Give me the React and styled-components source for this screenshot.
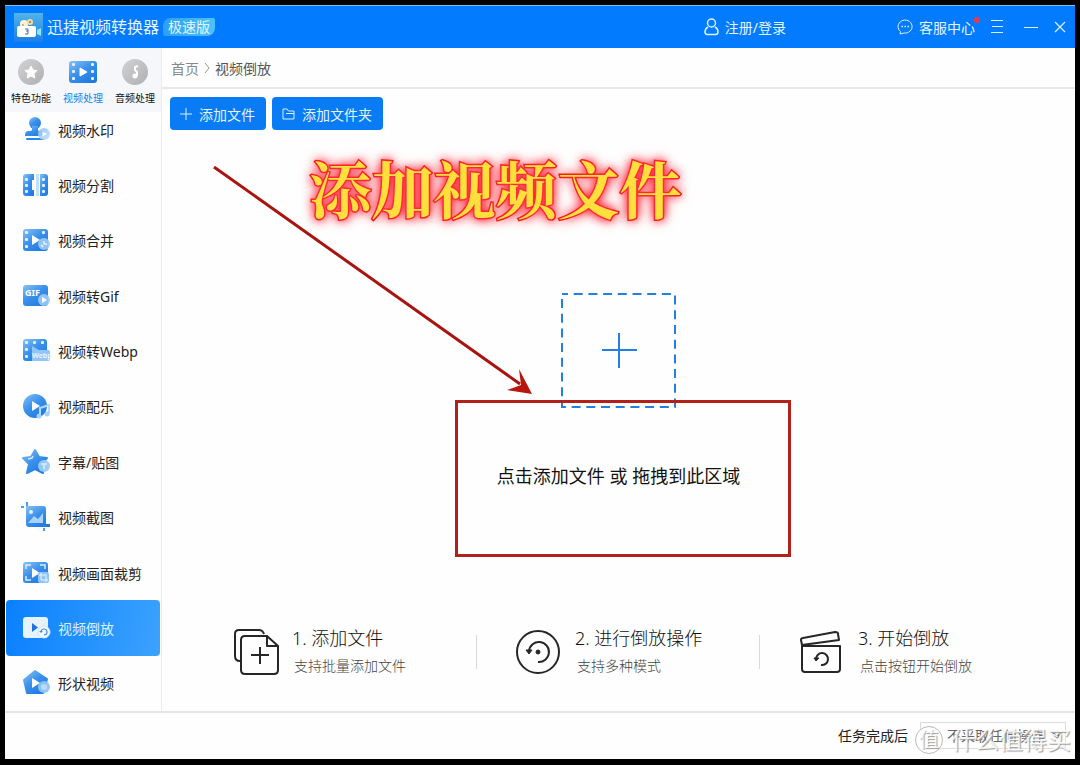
import React, { useState } from "react";
import styled, { createGlobalStyle } from "styled-components";

const menuItems = [
  { id: "watermark", label: "视频水印" },
  { id: "split", label: "视频分割" },
  { id: "merge", label: "视频合并" },
  { id: "gif", label: "视频转Gif" },
  { id: "webp", label: "视频转Webp" },
  { id: "music", label: "视频配乐" },
  { id: "sticker", label: "字幕/贴图" },
  { id: "capture", label: "视频截图" },
  { id: "crop", label: "视频画面裁剪" },
  { id: "reverse", label: "视频倒放" },
  { id: "shape", label: "形状视频" },
];

const tabs = [
  { id: "special", label: "特色功能" },
  { id: "video", label: "视频处理" },
  { id: "audio", label: "音频处理" },
];

const steps = [
  { id: "add", title: "1. 添加文件", text: "支持批量添加文件" },
  { id: "rewind", title: "2. 进行倒放操作", text: "支持多种模式" },
  { id: "start", title: "3. 开始倒放", text: "点击按钮开始倒放" },
];

const Gradients = () => (
  <HiddenSvg aria-hidden="true">
    <defs>
      <linearGradient id="blue" x1="0" y1="0" x2="0.8" y2="1">
        <stop offset="0" stopColor="#86c2f8" />
        <stop offset="0.5" stopColor="#3a90ea" />
        <stop offset="1" stopColor="#1f7ae0" />
      </linearGradient>
      <linearGradient id="pale" x1="0" y1="0" x2="1" y2="1">
        <stop offset="0" stopColor="#8cc1f6" />
        <stop offset="1" stopColor="#c4e0fb" />
      </linearGradient>
      <linearGradient id="grey" x1="0" y1="0" x2="1" y2="1">
        <stop offset="0" stopColor="#d2d2d4" />
        <stop offset="1" stopColor="#b0b0b3" />
      </linearGradient>
      <linearGradient id="sky" x1="0" y1="0" x2="0" y2="1">
        <stop offset="0" stopColor="#4fb5e8" />
        <stop offset="1" stopColor="#1b7fe6" />
      </linearGradient>
    </defs>
  </HiddenSvg>
);

const Holes = ({ x, ys = [6, 12, 18] }) =>
  ys.map((y) => (
    <rect key={y} x={x} y={y + 1} width="3" height="3" rx="1" fill="#e4f3ff" />
  ));

const menuShapes = {
  watermark: (
    <>
      <circle cx="13" cy="7" r="6" fill="url(#blue)" />
      <path d="M10 10h6v4c0 1 1 1 3 1 3 0 4 1 4 5H3c0-4 1-5 4-5 2 0 3 0 3-2z" fill="url(#blue)" />
      <rect x="4" y="22" width="18" height="2" rx="1" fill="#2a86e6" />
      <circle cx="22" cy="18" r="6" fill="url(#pale)" fillOpacity="0.9" />
      <path d="M20.500 15.500l4.500 2.500-4.500 2.500z" fill="#fff" />
    </>
  ),
  split: (
    <>
      <path d="M4 3h8v6h-2v10h2v6H4a3 3 0 0 1-3-3V6a3 3 0 0 1 3-3z" fill="url(#blue)" />
      <path d="M18 3h5a3 3 0 0 1 3 3v16a3 3 0 0 1-3 3h-5z" fill="url(#blue)" />
      <rect x="14" y="3" width="3" height="22" fill="#c4e0fb" />
      <Holes x={3} />
      <Holes x={20} />
    </>
  ),
  merge: (
    <>
      <rect x="1" y="3" width="25" height="22" rx="3" fill="url(#blue)" />
      <Holes x={3} ys={[4, 11, 18]} />
      <Holes x={20} ys={[4]} />
      <path d="M10 9l8 5-8 5z" fill="#fff" />
      <circle cx="22" cy="18" r="6" fill="#9bcaf7" fillOpacity="0.9" />
      <path d="M22 15v3h3M19 19l2 2" stroke="#e8f4ff" strokeWidth="1.500" fill="none" />
    </>
  ),
  gif: (
    <>
      <rect x="1" y="3" width="25" height="21" rx="3" fill="url(#blue)" />
      <text x="3" y="14" fontSize="9" fontWeight="700" fill="#fff">GIF</text>
      <circle cx="22" cy="18" r="6" fill="#9bcaf7" fillOpacity="0.9" />
      <path d="M20 15l5 3-5 3z" fill="#fff" />
    </>
  ),
  webp: (
    <>
      <rect x="1" y="2" width="24" height="22" rx="3" fill="url(#blue)" />
      <Holes x={3} ys={[3, 10, 17]} />
      <Holes x={11} ys={[3]} />
      <Holes x={19} ys={[3]} />
      <path d="M10 9l7 4h9a2 2 0 0 1 2 2v7a2 2 0 0 1-2 2H10z" fill="#8fc5f7" />
      <text x="10" y="21" fontSize="7" fontWeight="700" fill="#e4f3ff">Webp</text>
    </>
  ),
  music: (
    <>
      <circle cx="13" cy="14" r="12" fill="url(#blue)" />
      <path d="M10 9l8 5-8 5z" fill="#fff" />
      <path d="M18 24v-8l9-3v9" stroke="#b5d9fb" strokeWidth="2" fill="none" />
      <circle cx="17" cy="24" r="2.500" fill="#a5d0fa" />
      <circle cx="25" cy="22" r="2.500" fill="#a5d0fa" />
    </>
  ),
  sticker: (
    <>
      <path
        d="M13 2l4 7 8 1-6 6 2 9-8-4-8 4 2-9-6-6 8-1z"
        fill="url(#blue)"
        stroke="url(#blue)"
        strokeWidth="2"
        strokeLinejoin="round"
      />
      <path d="M6 11l4-1 1-2" stroke="#d4eaff" strokeWidth="1.500" fill="none" />
      <circle cx="22" cy="18" r="6" fill="#9bcaf7" fillOpacity="0.95" />
      <path d="M19 16h6M22 16v5" stroke="#d8ecff" strokeWidth="1.500" />
    </>
  ),
  capture: (
    <>
      <path d="M4 3h17a3 3 0 0 1 3 3v15h4v3H7a3 3 0 0 1-3-3z" fill="url(#blue)" />
      <path d="M5 -1v4M-1 4h3M22 25v3" stroke="#4d9bea" strokeWidth="2" />
      <circle cx="9" cy="9" r="2" fill="#e4f3ff" />
      <path d="M6 20l6-7 4 3 5-6v10z" fill="#a9d3fa" />
    </>
  ),
  crop: (
    <>
      <rect x="1" y="3" width="25" height="21" rx="3" fill="url(#blue)" />
      <path d="M4 10V6h5M18 6h5v4M4 17v4h5" stroke="#d8ecff" strokeWidth="1.500" fill="none" />
      <path d="M10 9l8 5-8 5z" fill="#fff" />
      <rect x="16" y="13" width="11" height="11" rx="2" fill="#8fc5f7" />
      <path d="M19 14v7h7M17 16h7v7" stroke="#e8f4ff" fill="none" />
    </>
  ),
  reverse: (
    <>
      <rect x="1" y="3" width="25" height="21" rx="3" fill="#e6f3ff" />
      <path d="M10 9l6 4.500-6 4.500z" fill="#1a74dc" />
      <circle cx="22" cy="18" r="6" fill="#f3f9ff" stroke="#cfe5fb" />
      <path d="M19 18a3 3 0 1 1 3 3" stroke="#4a8fd8" strokeWidth="1.200" fill="none" />
      <path d="M17 17h4l-2 2z" fill="#4a8fd8" />
    </>
  ),
  shape: (
    <>
      <path
        d="M13 2l12 8-4 14H5L2 11z"
        fill="url(#blue)"
        stroke="url(#blue)"
        strokeWidth="2"
        strokeLinejoin="round"
      />
      <path d="M10 9l8 5-8 5z" fill="#fff" />
      <circle cx="22" cy="18" r="6" fill="#8fc5f7" fillOpacity="0.95" />
      <circle cx="22" cy="18" r="3" fill="#b9dbfb" />
    </>
  ),
};

const tabShapes = {
  special: (
    <>
      <circle cx="14" cy="14" r="13" fill="url(#grey)" />
      <path
        d="M14 8l2 4 4 .5-3 3 .8 4.500-3.800-2-3.800 2 .8-4.500-3-3 4-.5z"
        fill="#fff"
        stroke="#fff"
        strokeLinejoin="round"
      />
    </>
  ),
  video: (
    <>
      <rect x="0" y="3" width="28" height="22" rx="3" fill="url(#blue)" />
      <Holes x={3} ys={[4, 11, 18]} />
      <Holes x={22} ys={[4, 11, 18]} />
      <path d="M11 10l7 4-7 4z" fill="#fff" stroke="#fff" strokeLinejoin="round" />
    </>
  ),
  audio: (
    <>
      <circle cx="14" cy="14" r="13" fill="url(#grey)" />
      <path d="M17 8l-3 1v3l2 2v4" stroke="#fff" strokeWidth="2" fill="none" />
      <circle cx="14" cy="18" r="2.500" fill="#fff" />
    </>
  ),
};

const stepShapes = {
  add: (
    <>
      <path d="M7 33C3 33 2 31 2 28V6c0-3 1-4 4-4h20c3 0 4 1 5 4" />
      <path d="M12 8h22l11 10v24c0 3-1 4-4 4H12c-3 0-4-1-4-4V12c0-3 1-4 4-4z" />
      <path d="M34 8v10h11M27 19v17M18 27h18" />
    </>
  ),
  rewind: (
    <>
      <circle cx="22" cy="24" r="21" />
      <path d="M13 23a10 10 0 1 1 9 11" />
      <path d="M10 22h6l-3 4z" fill="#262626" strokeWidth="1" />
      <circle cx="22" cy="24" r="2" fill="#262626" strokeWidth="1" />
    </>
  ),
  start: (
    <>
      <path d="M3 18h38v23c0 2-1 3-3 3H6c-2 0-3-1-3-3z" />
      <path d="M3 17L2 12c0-1 0-2 2-2l32-6c2 0 3 0 3 2l1 6z" />
      <path d="M17 31a6 6 0 1 1 5 6" />
      <path d="M15 30h5l-3 3z" fill="#262626" strokeWidth="1" />
    </>
  ),
};

const App = () => {
  const [active, setActive] = useState("reverse");
  const [tab, setTab] = useState("video");

  return (
    <Frame>
      <GlobalStyle />
      <Gradients />
      <TitleBar>
        <Brand>
          <svg width="29" height="29" viewBox="0 0 29 29">
            <rect width="29" height="29" fill="url(#sky)" />
            <circle cx="10" cy="11" r="4" fill="#fff3d8" />
            <circle cx="16" cy="9" r="3" fill="#f7d9a0" />
            <circle cx="16" cy="9" r="1" fill="#a8713a" />
            <circle cx="9" cy="12" r="1" fill="#e69a3c" />
            <rect x="3" y="13" width="19" height="11" rx="2" fill="#fff" />
            <path d="M23 17l4-2v8l-4-2z" fill="#8fe3f2" />
            <path d="M11 16h3v2h-2M14 18v3h-3" stroke="#4a6a8c" fill="none" />
          </svg>
          <AppName>迅捷视频转换器</AppName>
          <Edition>极速版</Edition>
        </Brand>
        <BarActions>
          <BarButton $space={111}>
            <svg width="15" height="18" viewBox="0 0 15 18" fill="none" stroke="#d9f1ff" strokeWidth="1.500">
              <circle cx="7.500" cy="5" r="4" />
              <path d="M4 9c-2 1-3 3-3 5 0 1.500 1 2.500 2.500 2.500h8c1.500 0 2.500-1 2.500-2.500 0-2-1-4-3-5" />
            </svg>
            注册/登录
          </BarButton>
          <BarButton $space={15}>
            <svg width="16" height="16" viewBox="0 0 16 16" fill="none" stroke="#d9f1ff">
              <path d="M3 15l.5-2.500A7 6.500 0 1 1 7 14z" strokeLinejoin="round" />
              <path d="M4.500 7.500h1.500M7.500 7.500H9M10.500 7.500H12" strokeWidth="1.500" />
            </svg>
            客服中心
            <Dot />
          </BarButton>
          <BarButton $space={20} aria-label="菜单">
            <svg width="14" height="14" viewBox="0 0 14 14" stroke="#d9f1ff">
              <path d="M1 0.500h12M2 6.500h11M1 12.500h12" />
            </svg>
          </BarButton>
          <BarButton $space={16} aria-label="最小化">
            <svg width="14" height="14" viewBox="0 0 14 14" stroke="#d9f1ff">
              <path d="M0 7.500h14" />
            </svg>
          </BarButton>
          <BarButton aria-label="关闭">
            <svg width="12" height="12" viewBox="0 0 12 12" stroke="#d9f1ff" strokeWidth="1.200">
              <path d="M1 1l10 10M11 1L1 11" />
            </svg>
          </BarButton>
        </BarActions>
      </TitleBar>

      <Body>
        <Sidebar>
          <Tabs>
            {tabs.map((t) => (
              <Tab key={t.id} $active={t.id === tab} onClick={() => setTab(t.id)}>
                <svg width="28" height="28" viewBox="0 0 28 28">{tabShapes[t.id]}</svg>
                {t.label}
              </Tab>
            ))}
          </Tabs>
          <Menu>
            {menuItems.map((item) => (
              <MenuItem
                key={item.id}
                $active={item.id === active}
                onClick={() => setActive(item.id)}
              >
                <MenuIcon viewBox="0 0 28 28">{menuShapes[item.id]}</MenuIcon>
                {item.label}
              </MenuItem>
            ))}
          </Menu>
        </Sidebar>

        <Main>
          <Breadcrumb>
            <CrumbLink href="#">首页</CrumbLink>
            <svg width="6" height="12" viewBox="0 0 6 12" fill="none" stroke="#9a9a9a">
              <path d="M1 1l4 5-4 5" />
            </svg>
            <span>视频倒放</span>
          </Breadcrumb>
          <Toolbar>
            <ToolButton>
              <svg width="12" height="12" viewBox="0 0 12 12" stroke="#d9f1ff">
                <path d="M6 0v12M0 6h12" />
              </svg>
              添加文件
            </ToolButton>
            <ToolButton>
              <svg width="13" height="12" viewBox="0 0 13 12" fill="none" stroke="#d9f1ff">
                <path d="M1 1h4l1.500 2H12v8H1zM4 5.500h8" />
              </svg>
              添加文件夹
            </ToolButton>
          </Toolbar>

          <DropArea>
            <DropButton>
              <svg width="115" height="115" viewBox="0 0 115 115" fill="none" stroke="#2380e0" strokeWidth="2">
                <rect x="1" y="1" width="113" height="113" strokeDasharray="9 5.700" strokeDashoffset="3" />
                <path d="M58 40v35M41 57h35" />
              </svg>
              <span>点击添加文件 或 拖拽到此区域</span>
            </DropButton>
            <Callout>添加视频文件</Callout>
            <Arrow viewBox="0 0 320 230">
              <path d="M1 1l306 217" stroke="#a81410" strokeWidth="3" />
              <path d="M319 228l-25-4 14-5-2-16z" fill="#b8160c" />
            </Arrow>
            <Highlight />
          </DropArea>

          <Steps>
            {steps.map((step) => (
              <Step key={step.id}>
                <StepIcon viewBox="0 0 48 48">{stepShapes[step.id]}</StepIcon>
                <div>
                  <StepTitle>{step.title}</StepTitle>
                  <StepText>{step.text}</StepText>
                </div>
              </Step>
            ))}
          </Steps>
        </Main>
      </Body>

      <Footer>
        <label htmlFor="after">任务完成后</label>
        <Select id="after" defaultValue="none">
          <option value="none">不采取任何操作</option>
        </Select>
        <Watermark>
          <WatermarkBadge>值</WatermarkBadge>
          什么值得买
        </Watermark>
      </Footer>
    </Frame>
  );
};

const GlobalStyle = createGlobalStyle`
  * {
    box-sizing: border-box;
  }

  body {
    margin: 0;
    background: #000;
    color: #222;
    font: 14px "Noto Sans", "Noto Sans CJK SC", sans-serif;
  }

  button, select {
    font: inherit;
    color: inherit;
    border: none;
    background: none;
    padding: 0;
    cursor: pointer;
  }
`;

const HiddenSvg = styled.svg`
  position: absolute;
  width: 0;
  height: 0;
`;

const Frame = styled.div`
  display: flex;
  flex-direction: column;
  min-height: 100vh;
  border: 5px solid #000;
  border-bottom-width: 6px;
  background: #fefefe;
`;

const TitleBar = styled.header`
  display: flex;
  align-items: center;
  justify-content: space-between;
  height: 43px;
  padding: 0 9px;
  color: #e3f4ff;
  background: #037bfe;
  border-top: 1px solid #7cc0fa;
`;

const Brand = styled.div`
  display: flex;
  align-items: center;
  gap: 4px;
`;

const AppName = styled.h1`
  margin: 0;
  font-size: 16px;
  font-weight: 400;
  line-height: 24px;
`;

const Edition = styled.span`
  padding: 0 5px;
  font-size: 14px;
  line-height: 18px;
  border-radius: 8px 2px 8px 2px;
  background: linear-gradient(90deg, #2ba0f5, #4cc3f7);
`;

const BarActions = styled.div`
  display: flex;
  align-items: center;
`;

const BarButton = styled.button`
  position: relative;
  display: flex;
  align-items: center;
  gap: 6px;
  margin-right: ${({ $space }) => ($space ? $space : 0)}px;
`;

const Dot = styled.i`
  position: absolute;
  top: 0;
  right: -5px;
  width: 6px;
  height: 6px;
  border-radius: 50%;
  background: #e8394a;
`;

const Body = styled.div`
  display: flex;
  flex: 1;
`;

const Sidebar = styled.aside`
  display: flex;
  flex-direction: column;
  width: 157px;
  flex-shrink: 0;
  border-right: 1px solid #ececee;
`;

const Tabs = styled.div`
  display: grid;
  grid-template-columns: repeat(3, 1fr);
  padding: 10px 0 6px;
  background: #f5f7fb;
`;

const Tab = styled.button`
  display: flex;
  flex-direction: column;
  align-items: center;
  gap: 4px;
  font-size: 10px;
  line-height: 16px;
  white-space: nowrap;
  color: ${({ $active }) => ($active ? "#1583ea" : "#111")};
`;

const Menu = styled.nav`
  display: flex;
  flex-direction: column;
  flex: 1;
  margin-top: -10px;
  padding: 0 1px;
`;

const MenuItem = styled.button`
  display: flex;
  align-items: center;
  flex: 1;
  gap: 8px;
  min-height: 40px;
  padding-left: 16px;
  border-radius: 4px;
  color: ${({ $active }) => ($active ? "#d9f1ff" : "#222")};
  background: ${({ $active }) =>
    $active ? "linear-gradient(100deg, #0a80ff, #3ba2fd)" : "none"};
`;

const MenuIcon = styled.svg`
  width: 28px;
  height: 28px;
  overflow: visible;
`;

const Main = styled.main`
  display: flex;
  flex-direction: column;
  flex: 1;
  min-width: 0;
`;

const Breadcrumb = styled.div`
  display: flex;
  align-items: center;
  gap: 5px;
  height: 41px;
  padding-left: 9px;
  color: #555;
  border-bottom: 2px solid #e8e8e8;
`;

const CrumbLink = styled.a`
  color: #888;
  text-decoration: none;
`;

const Toolbar = styled.div`
  display: flex;
  gap: 6px;
  padding: 8px 8px 0;
`;

const ToolButton = styled.button`
  display: flex;
  align-items: center;
  gap: 7px;
  height: 33px;
  padding: 0 11px 0 10px;
  border-radius: 4px;
  color: #e3f4ff;
  background: #087bf5;
`;

const DropArea = styled.section`
  position: relative;
  display: flex;
  align-items: center;
  justify-content: center;
  flex: 1;
  padding-top: 26px;
`;

const DropButton = styled.button`
  display: flex;
  flex-direction: column;
  align-items: center;
  gap: 56px;
  font-size: 18px;
  line-height: 24px;
  color: #111;
`;

const Callout = styled.strong`
  position: absolute;
  top: 20px;
  left: calc(50% - 309px);
  font: 700 62px/76px "Noto Serif CJK SC", "Noto Sans CJK SC", serif;
  white-space: nowrap;
  color: #ffdf3c;
  -webkit-text-stroke: 3px #f0140c;
  paint-order: stroke fill;
  text-shadow: 0 0 8px #ff2030, 0 0 12px #ff4050, 0 0 14px #ff6070;
  pointer-events: none;
`;

const Arrow = styled.svg`
  position: absolute;
  top: 36px;
  left: calc(50% - 406px);
  width: 320px;
  height: 230px;
  pointer-events: none;
`;

const Highlight = styled.div`
  position: absolute;
  top: 270px;
  left: calc(50% - 164px);
  width: 336px;
  height: 157px;
  border: 3px solid #b3201a;
  pointer-events: none;
`;

const Steps = styled.div`
  display: grid;
  grid-template-columns: repeat(3, 1fr);
  padding: 0 33px 31px 31px;
`;

const Step = styled.div`
  position: relative;
  display: flex;
  align-items: center;
  gap: 11px;
  padding-left: 40px;

  & + &::before {
    content: "";
    position: absolute;
    left: 0;
    height: 34px;
    border-left: 1px solid #d8d8d8;
  }
`;

const StepIcon = styled.svg`
  width: 48px;
  height: 48px;
  fill: none;
  stroke: #262626;
  stroke-width: 2;
  stroke-linejoin: round;
`;

const StepTitle = styled.h2`
  margin: 0;
  font-size: 18px;
  font-weight: 300;
  line-height: 28px;
  color: #111;
`;

const StepText = styled.p`
  margin: 0;
  padding-left: 2px;
  font-weight: 300;
  line-height: 28px;
  color: #444;
`;

const Footer = styled.footer`
  position: relative;
  display: flex;
  align-items: center;
  justify-content: flex-end;
  gap: 12px;
  height: 48px;
  padding: 0 9px 2px 0;
  border-top: 2px solid #e6e6e6;
`;

const Select = styled.select`
  width: 146px;
  height: 27px;
  padding-left: 22px;
  border: 1px solid #ddd;
  color: #666;
`;

const Watermark = styled.div`
  position: absolute;
  right: 4px;
  bottom: 4px;
  display: flex;
  align-items: center;
  gap: 8px;
  font-size: 24px;
  line-height: 30px;
  color: rgba(255, 255, 255, 0.85);
  text-shadow: 1px 1px 1px #999;
  pointer-events: none;
`;

const WatermarkBadge = styled.span`
  width: 28px;
  height: 28px;
  font-size: 20px;
  line-height: 26px;
  text-align: center;
  border: 1px solid #bbb;
  border-radius: 50%;
  background: #fff;
`;

export default App;
